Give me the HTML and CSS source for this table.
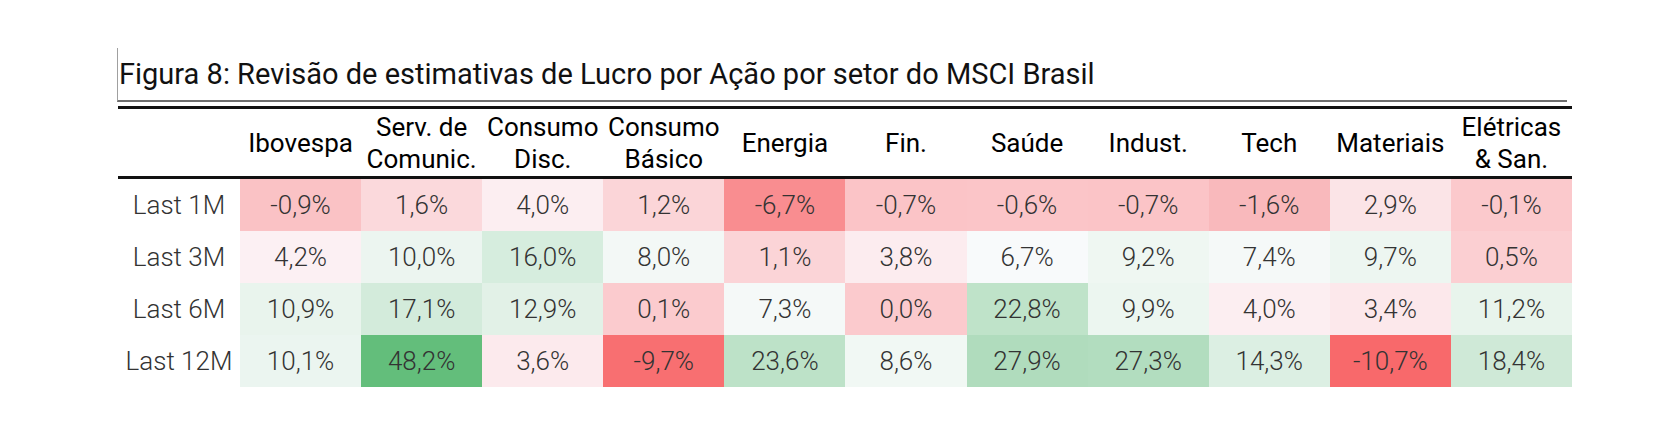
FILE: index.html
```html
<!DOCTYPE html>
<html lang="pt-BR">
<head>
<meta charset="utf-8">
<title>Figura 8</title>
<link rel="stylesheet" href="styles.css">
</head>
<body>
<div class="figure">
  <div class="title">Figura 8: Revisão de estimativas de Lucro por Ação por setor do MSCI Brasil</div>
  <div class="heat">
    <div class="hd corner"></div>
    <div class="hd">Ibovespa</div>
    <div class="hd">Serv. de<br>Comunic.</div>
    <div class="hd">Consumo<br>Disc.</div>
    <div class="hd">Consumo<br>Básico</div>
    <div class="hd">Energia</div>
    <div class="hd">Fin.</div>
    <div class="hd">Saúde</div>
    <div class="hd">Indust.</div>
    <div class="hd">Tech</div>
    <div class="hd">Materiais</div>
    <div class="hd">Elétricas<br>&amp; San.</div>

    <div class="lbl">Last 1M</div>
    <div class="cell" style="background:#fac2c5">-0,9%</div>
    <div class="cell" style="background:#fbd9dc">1,6%</div>
    <div class="cell" style="background:#fceef1">4,0%</div>
    <div class="cell" style="background:#fbd5d8">1,2%</div>
    <div class="cell" style="background:#f98d90">-6,7%</div>
    <div class="cell" style="background:#fbc4c7">-0,7%</div>
    <div class="cell" style="background:#fbc5c8">-0,6%</div>
    <div class="cell" style="background:#fbc4c7">-0,7%</div>
    <div class="cell" style="background:#f9b9bc">-1,6%</div>
    <div class="cell" style="background:#fbe4e7">2,9%</div>
    <div class="cell" style="background:#fbc9cc">-0,1%</div>

    <div class="lbl">Last 3M</div>
    <div class="cell" style="background:#fcf0f3">4,2%</div>
    <div class="cell" style="background:#ecf5f0">10,0%</div>
    <div class="cell" style="background:#d6edde">16,0%</div>
    <div class="cell" style="background:#f3f8f6">8,0%</div>
    <div class="cell" style="background:#fbd4d7">1,1%</div>
    <div class="cell" style="background:#fcecef">3,8%</div>
    <div class="cell" style="background:#f8fafb">6,7%</div>
    <div class="cell" style="background:#eff7f2">9,2%</div>
    <div class="cell" style="background:#f5f9f8">7,4%</div>
    <div class="cell" style="background:#edf6f1">9,7%</div>
    <div class="cell" style="background:#fbcfd2">0,5%</div>

    <div class="lbl">Last 6M</div>
    <div class="cell" style="background:#e9f4ed">10,9%</div>
    <div class="cell" style="background:#d3ebdb">17,1%</div>
    <div class="cell" style="background:#e2f1e7">12,9%</div>
    <div class="cell" style="background:#fbcbce">0,1%</div>
    <div class="cell" style="background:#f5f9f8">7,3%</div>
    <div class="cell" style="background:#fbcacd">0,0%</div>
    <div class="cell" style="background:#bfe3c9">22,8%</div>
    <div class="cell" style="background:#ecf6f0">9,9%</div>
    <div class="cell" style="background:#fceef1">4,0%</div>
    <div class="cell" style="background:#fce8eb">3,4%</div>
    <div class="cell" style="background:#e8f4ec">11,2%</div>

    <div class="lbl">Last 12M</div>
    <div class="cell" style="background:#ebf5f0">10,1%</div>
    <div class="cell" style="background:#63be7b">48,2%</div>
    <div class="cell" style="background:#fceaed">3,6%</div>
    <div class="cell" style="background:#f86f71">-9,7%</div>
    <div class="cell" style="background:#bde2c8">23,6%</div>
    <div class="cell" style="background:#f1f8f4">8,6%</div>
    <div class="cell" style="background:#b0dcbd">27,9%</div>
    <div class="cell" style="background:#b2ddbf">27,3%</div>
    <div class="cell" style="background:#dcefe3">14,3%</div>
    <div class="cell" style="background:#f8696b">-10,7%</div>
    <div class="cell" style="background:#cfe9d7">18,4%</div>
  </div>
</div>
</body>
</html>
```

FILE: styles.css
```css
html, body {
  margin: 0;
  padding: 0;
  background: #ffffff;
}

body {
  font-family: Roboto, "Liberation Sans", sans-serif;
}

.figure {
  margin: 48px 0 0 117px;
  width: 1455px;
}

.title {
  width: 1450px;
  height: 54px;
  box-sizing: border-box;
  border-left: 1px solid #a0a0a0;
  border-bottom: 2px solid #6e6e6e;
  padding: 3px 0 0 1px;
  font-size: 29px;
  line-height: 46px;
  color: #111111;
  white-space: nowrap;
}

.heat {
  margin-top: 4px;
  margin-left: 1px;
  border-top: 3px solid #111111;
  display: grid;
  grid-template-columns: 122px repeat(11, 1fr);
  grid-template-rows: 70px repeat(4, 52px);
}

.hd {
  box-sizing: border-box;
  border-bottom: 3px solid #111111;
  display: flex;
  align-items: center;
  justify-content: center;
  text-align: center;
  font-size: 26px;
  line-height: 32px;
  color: #000000;
  white-space: nowrap;
}

.lbl,
.cell {
  display: flex;
  align-items: center;
  justify-content: center;
  font-size: 26px;
  font-weight: 300;
  color: #333333;
  white-space: nowrap;
}

.lbl {
  background: #ffffff;
}
```
